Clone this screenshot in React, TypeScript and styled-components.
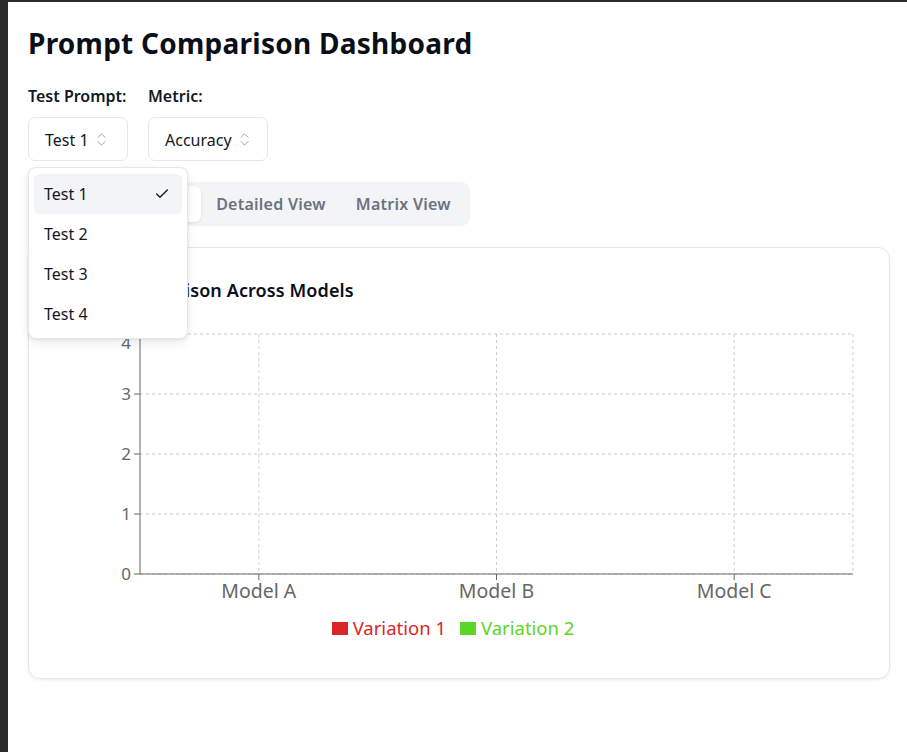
import React from "react";
import styled, { createGlobalStyle } from "styled-components";
import { ChevronsUpDown, Check } from "lucide-react";

const Global = createGlobalStyle`
  html, body { margin: 0; padding: 0; background: #2b2b2b; }
  body { font-family: "Noto Sans", "Open Sans", sans-serif; color: #111827; }
  #root { margin: 2px 0 0 8px; background: #ffffff; min-height: calc(100vh - 2px); }
  * { box-sizing: border-box; }
`;

const Page = styled.div`
  padding: 20px 17px 40px 20px;
  display: flex;
  flex-direction: column;
`;

const Title = styled.h1`
  margin: 0;
  font-size: 28px;
  line-height: 42px;
  font-weight: 700;
  letter-spacing: 0.25px;
  color: #0b0f1a;
`;

const Controls = styled.div`
  display: flex;
  gap: 20px;
  margin-top: 20px;
`;

const Field = styled.div`
  position: relative;
  display: flex;
  flex-direction: column;
  gap: 9px;
`;

const Label = styled.label`
  font-size: 16px;
  line-height: 24px;
  font-weight: 600;
  color: #111827;
`;

const SelectButton = styled.button<{ $w: number }>`
  width: ${(p) => p.$w}px;
  height: 44px;
  display: flex;
  align-items: center;
  gap: 4px;
  padding: 1px 0 0 16px;
  background: #fff;
  border: 1px solid #e5e7eb;
  border-radius: 7px;
  font-family: inherit;
  font-size: 16px;
  color: #111827;
  svg { color: #9ca3af; }
`;

const Menu = styled.div`
  position: absolute;
  top: 83px;
  left: 0;
  width: 160px;
  padding: 6px 5px 4px 5px;
  background: #fff;
  border: 1px solid #e5e7eb;
  border-radius: 8px;
  box-shadow: 0 4px 10px rgba(0, 0, 0, 0.08), 0 1px 3px rgba(0, 0, 0, 0.06);
  z-index: 10;
`;

const MenuItem = styled.div<{ $active?: boolean }>`
  height: 40px;
  display: flex;
  align-items: center;
  justify-content: space-between;
  padding: 0 12px 0 10px;
  border-radius: 6px;
  font-size: 16px;
  color: #111827;
  background: ${(p) => (p.$active ? "#f3f4f6" : "transparent")};
`;

const TabList = styled.div`
  align-self: flex-start;
  display: flex;
  margin-top: 21px;
  padding: 4px;
  background: #f3f4f6;
  border-radius: 9px;
`;

const Tab = styled.div<{ $active?: boolean }>`
  height: 36px;
  display: flex;
  align-items: center;
  padding: 0 15px;
  border-radius: 6px;
  font-size: 16px;
  font-weight: 600;
  letter-spacing: 0.25px;
  color: ${(p) => (p.$active ? "#111827" : "#6b7280")};
  background: ${(p) => (p.$active ? "#fff" : "transparent")};
  box-shadow: ${(p) => (p.$active ? "0 1px 3px rgba(0,0,0,0.1)" : "none")};
`;

const Card = styled.section`
  margin-top: 21px;
  border: 1px solid #e5e7eb;
  border-radius: 12px;
  box-shadow: 0 1px 3px rgba(0, 0, 0, 0.08);
  padding: 28px 24px 38px 24px;
  display: flex;
  flex-direction: column;
`;

const CardTitle = styled.h2`
  margin: 0;
  font-size: 18px;
  line-height: 28px;
  font-weight: 600;
  letter-spacing: 0.1px;
  color: #0b0f1a;
`;

const ChartSvg = styled.svg`
  display: block;
  margin-top: 25px;
  overflow: visible;
  font-family: "Noto Sans", "Open Sans", sans-serif;
`;

const Legend = styled.ul`
  list-style: none;
  margin: 12px 0 0 0;
  padding: 0 12px 0 0;
  display: flex;
  justify-content: center;
  gap: 14px;
`;

const LegendItem = styled.li<{ $color: string }>`
  display: flex;
  align-items: center;
  gap: 5px;
  font-size: 18.5px;
  line-height: 24px;
  color: ${(p) => p.$color};
`;

const Swatch = styled.span<{ $color: string }>`
  width: 16px;
  height: 13px;
  background: ${(p) => p.$color};
`;

const W = 812;
const L = 87;
const R = 800;
const T = 5;
const B = 245;
const models = ["Model A", "Model B", "Model C"];

function Chart() {
  const band = (R - L) / 3;
  const yTicks = [0, 1, 2, 3, 4];
  const yOf = (v: number) => B - (v / 4) * (B - T);
  return (
    <ChartSvg width={W} height={275} viewBox={`0 0 ${W} 275`}>
      <g stroke="#cccccc" strokeDasharray="3 3" fill="none">
        {yTicks.map((v) => (
          <line key={v} x1={L} x2={R} y1={yOf(v)} y2={yOf(v)} />
        ))}
        {models.map((m, i) => (
          <line key={m} x1={L + band * (i + 0.5)} x2={L + band * (i + 0.5)} y1={T} y2={B} />
        ))}
        <line x1={R} x2={R} y1={T} y2={B} />
      </g>
      <g stroke="#666666">
        <line x1={L} x2={L} y1={T} y2={B} />
        <line x1={L} x2={R} y1={B} y2={B} />
        {yTicks.map((v) => (
          <line key={v} x1={L - 6} x2={L} y1={yOf(v)} y2={yOf(v)} />
        ))}
        {models.map((m, i) => (
          <line key={m} x1={L + band * (i + 0.5)} x2={L + band * (i + 0.5)} y1={B} y2={B + 6} />
        ))}
      </g>
      <g fill="#666666">
        {yTicks.map((v) => (
          <text
            key={v}
            x={L - 9}
            y={yOf(v) + (v === 4 ? 15 : 6)}
            textAnchor="end"
            fontSize="17"
          >
            {v}
          </text>
        ))}
        {models.map((m, i) => (
          <text key={m} x={L + band * (i + 0.5)} y={B + 24} textAnchor="middle" fontSize="19.5">
            {m}
          </text>
        ))}
      </g>
    </ChartSvg>
  );
}

export default function App() {
  return (
    <>
      <Global />
      <Page>
        <Title>Prompt Comparison Dashboard</Title>
        <Controls>
          <Field>
            <Label>Test Prompt:</Label>
            <SelectButton $w={100}>
              Test 1 <ChevronsUpDown size={17} strokeWidth={1.4} />
            </SelectButton>
            <Menu>
              <MenuItem $active>
                Test 1 <Check size={16} strokeWidth={2} />
              </MenuItem>
              <MenuItem>Test 2</MenuItem>
              <MenuItem>Test 3</MenuItem>
              <MenuItem>Test 4</MenuItem>
            </Menu>
          </Field>
          <Field>
            <Label>Metric:</Label>
            <SelectButton $w={120}>
              Accuracy <ChevronsUpDown size={17} strokeWidth={1.4} />
            </SelectButton>
          </Field>
        </Controls>
        <TabList>
          <Tab $active>Comparison View</Tab>
          <Tab>Detailed View</Tab>
          <Tab>Matrix View</Tab>
        </TabList>
        <Card>
          <CardTitle>Metric Comparison Across Models</CardTitle>
          <Chart />
          <Legend>
            <LegendItem $color="#dc2626">
              <Swatch $color="#dc2626" />
              Variation 1
            </LegendItem>
            <LegendItem $color="#5cd626">
              <Swatch $color="#5cd626" />
              Variation 2
            </LegendItem>
          </Legend>
        </Card>
      </Page>
    </>
  );
}
